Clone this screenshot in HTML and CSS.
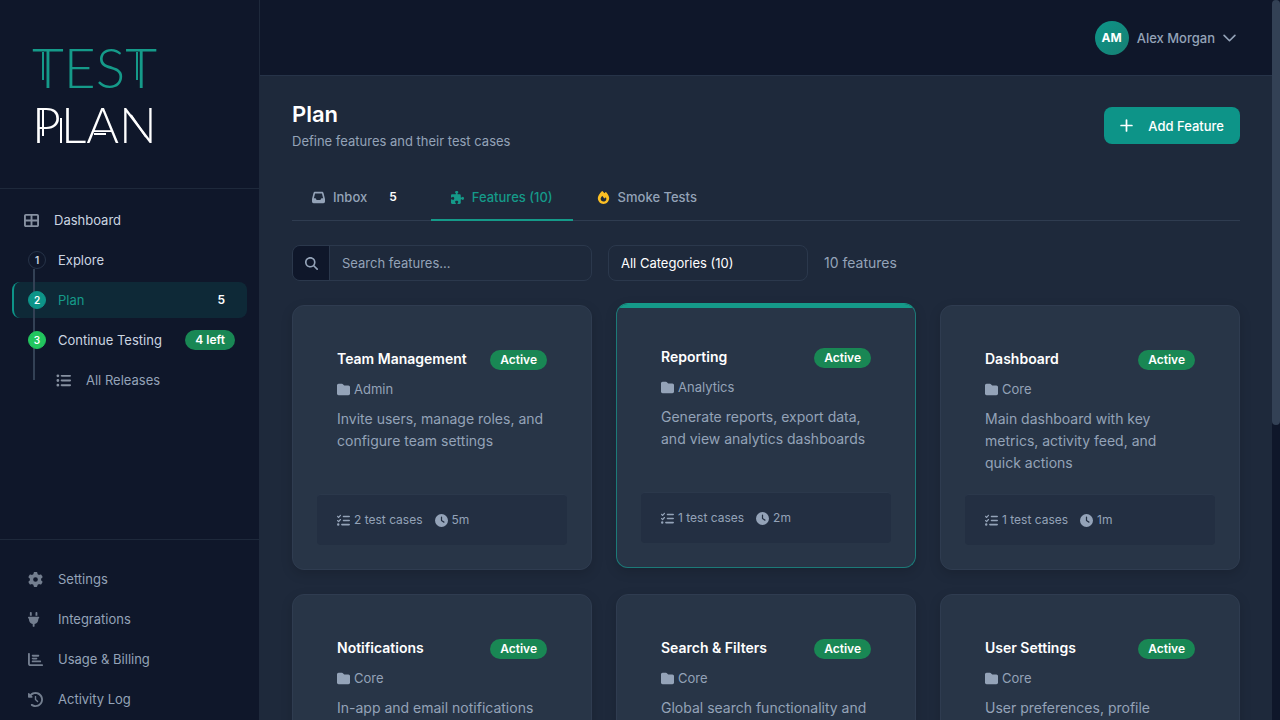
FILE: index.html
```html
<!DOCTYPE html>
<html lang="en">
<head>
    <meta charset="UTF-8">
    <meta name="viewport" content="width=device-width, initial-scale=1.0">
    <title>Plan - Test Plan</title>
    <link rel="stylesheet" href="styles.css">
</head>
<body>

<!-- Icon sprite -->
<svg class="sprite" aria-hidden="true">
    <symbol id="i-grid" viewBox="0 0 512 512"><path fill-rule="evenodd" d="M0 96C0 60.7 28.7 32 64 32H448c35.3 0 64 28.7 64 64V416c0 35.3-28.7 64-64 64H64c-35.3 0-64-28.7-64-64V96zm64 0v128H224V96H64zm384 0H288v128H448V96zM64 288v128H224V288H64zm384 0H288v128H448V288z"/></symbol>
    <symbol id="i-list" viewBox="0 0 512 512"><path d="M64 144a48 48 0 1 0 0-96 48 48 0 1 0 0 96zM192 64c-17.7 0-32 14.3-32 32s14.3 32 32 32H480c17.7 0 32-14.3 32-32s-14.3-32-32-32H192zm0 160c-17.7 0-32 14.3-32 32s14.3 32 32 32H480c17.7 0 32-14.3 32-32s-14.3-32-32-32H192zm0 160c-17.7 0-32 14.3-32 32s14.3 32 32 32H480c17.7 0 32-14.3 32-32s-14.3-32-32-32H192zM64 464a48 48 0 1 0 0-96 48 48 0 1 0 0 96zm48-208a48 48 0 1 0 -96 0 48 48 0 1 0 96 0z"/></symbol>
    <symbol id="i-gear" viewBox="0 0 512 512"><path d="M495.9 166.6c3.2 8.7 .5 18.4-6.4 24.6l-43.3 39.4c1.1 8.3 1.7 16.8 1.7 25.4s-.6 17.1-1.7 25.4l43.3 39.4c6.9 6.2 9.6 15.9 6.4 24.6c-4.4 11.9-9.7 23.3-15.8 34.3l-4.7 8.1c-6.6 11-14 21.4-22.1 31.2c-5.9 7.2-15.7 9.6-24.5 6.8l-55.7-17.7c-13.4 10.3-28.2 18.9-44 25.4l-12.5 57.1c-2 9.1-9 16.3-18.2 17.8c-13.8 2.3-28 3.5-42.5 3.5s-28.7-1.2-42.5-3.5c-9.2-1.5-16.2-8.7-18.2-17.8l-12.5-57.1c-15.8-6.5-30.6-15.1-44-25.4L83.1 425.9c-8.8 2.8-18.6 .3-24.5-6.8c-8.1-9.8-15.5-20.2-22.1-31.2l-4.7-8.1c-6.1-11-11.4-22.4-15.8-34.3c-3.2-8.7-.5-18.4 6.4-24.6l43.3-39.4C64.6 273.1 64 264.6 64 256s.6-17.1 1.7-25.4L22.4 191.2c-6.9-6.2-9.6-15.9-6.4-24.6c4.4-11.9 9.7-23.3 15.8-34.3l4.7-8.1c6.6-11 14-21.4 22.1-31.2c5.9-7.2 15.7-9.6 24.5-6.8l55.7 17.7c13.4-10.3 28.2-18.9 44-25.4l12.5-57.1c2-9.1 9-16.3 18.2-17.8C227.3 1.2 241.5 0 256 0s28.7 1.2 42.5 3.5c9.2 1.5 16.2 8.7 18.2 17.8l12.5 57.1c15.8 6.5 30.6 15.1 44 25.4l55.7-17.7c8.8-2.8 18.6-.3 24.5 6.8c8.1 9.8 15.5 20.2 22.1 31.2l4.7 8.1c6.1 11 11.4 22.4 15.8 34.3zM256 336a80 80 0 1 0 0-160 80 80 0 1 0 0 160z"/></symbol>
    <symbol id="i-plug" viewBox="0 0 512 512"><path d="M96 0C78.3 0 64 14.3 64 32v96h64V32c0-17.7-14.3-32-32-32zM288 0c-17.7 0-32 14.3-32 32v96h64V32c0-17.7-14.3-32-32-32zM32 160c-17.7 0-32 14.3-32 32s14.3 32 32 32v32c0 77.4 55 142 128 156.8V480c0 17.7 14.3 32 32 32s32-14.3 32-32V412.8C297 398 352 333.4 352 256V224c17.7 0 32-14.3 32-32s-14.3-32-32-32H32z"/></symbol>
    <symbol id="i-chart" viewBox="0 0 512 512"><path d="M32 32c17.7 0 32 14.3 32 32V400c0 8.8 7.2 16 16 16H480c17.7 0 32 14.3 32 32s-14.3 32-32 32H80c-44.2 0-80-35.8-80-80V64C0 46.3 14.3 32 32 32zm96 96c0-17.7 14.3-32 32-32l192 0c17.7 0 32 14.3 32 32s-14.3 32-32 32H160c-17.7 0-32-14.3-32-32zm32 64H288c17.7 0 32 14.3 32 32s-14.3 32-32 32H160c-17.7 0-32-14.3-32-32s14.3-32 32-32zm0 96H416c17.7 0 32 14.3 32 32s-14.3 32-32 32H160c-17.7 0-32-14.3-32-32s14.3-32 32-32z"/></symbol>
    <symbol id="i-history" viewBox="0 0 512 512"><path d="M75 75L41 41C25.9 25.9 0 36.6 0 57.9V168c0 13.3 10.7 24 24 24H134.1c21.4 0 32.1-25.9 17-41l-30.8-30.8C155 85.5 203 64 256 64c106 0 192 86 192 192s-86 192-192 192c-40.8 0-78.6-12.7-109.7-34.4c-14.5-10.1-34.4-6.6-44.6 7.9s-6.6 34.4 7.9 44.6C151.2 495 201.7 512 256 512c141.4 0 256-114.6 256-256S397.4 0 256 0C185.3 0 121.3 28.7 75 75zm181 53c-13.3 0-24 10.7-24 24V256c0 6.4 2.5 12.5 7 17l72 72c9.4 9.4 24.6 9.4 33.9 0s9.4-24.6 0-33.9l-65-65V152c0-13.3-10.7-24-24-24z"/></symbol>
    <symbol id="i-search" viewBox="0 0 512 512"><path d="M416 208c0 45.9-14.9 88.3-40 122.7L502.6 457.4c12.5 12.5 12.5 32.8 0 45.3s-32.8 12.5-45.3 0L330.7 376c-34.4 25.2-76.8 40-122.7 40C93.1 416 0 322.9 0 208S93.1 0 208 0S416 93.1 416 208zM208 352a144 144 0 1 0 0-288 144 144 0 1 0 0 288z"/></symbol>
    <symbol id="i-inbox" viewBox="0 0 512 512"><path d="M121 32C91.6 32 66 52 58.9 80.5L1.9 308.4C.6 313.5 0 318.7 0 323.9V416c0 35.3 28.7 64 64 64H448c35.3 0 64-28.7 64-64V323.9c0-5.2-.6-10.4-1.9-15.5l-57-227.9C446 52 420.4 32 391 32H121zm0 64H391l48 192H387.8c-12.1 0-23.2 6.8-28.6 17.7l-14.3 28.6c-5.4 10.8-16.5 17.7-28.6 17.7H195.8c-12.1 0-23.2-6.8-28.6-17.7l-14.3-28.6c-5.4-10.8-16.5-17.7-28.6-17.7H73L121 96z"/></symbol>
    <symbol id="i-puzzle" viewBox="0 0 512 512"><path d="M192 104.8c0-9.2-5.8-17.3-13.2-22.8C167.2 73.3 160 61.3 160 48c0-26.5 28.7-48 64-48s64 21.5 64 48c0 13.3-7.2 25.3-18.8 34c-7.4 5.5-13.2 13.6-13.2 22.8c0 12.8 10.4 23.2 23.2 23.2H336c26.5 0 48 21.5 48 48v56.8c0 12.8 10.4 23.2 23.2 23.2c9.2 0 17.3-5.8 22.8-13.2c8.7-11.6 20.7-18.8 34-18.8c26.5 0 48 28.7 48 64s-21.5 64-48 64c-13.3 0-25.3-7.2-34-18.8c-5.5-7.4-13.6-13.2-22.8-13.2c-12.8 0-23.2 10.4-23.2 23.2V464c0 26.5-21.5 48-48 48H279.2c-12.8 0-23.2-10.4-23.2-23.2c0-9.2 5.8-17.3 13.2-22.8c11.6-8.7 18.8-20.7 18.8-34c0-26.5-28.7-48-64-48s-64 21.5-64 48c0 13.3 7.2 25.3 18.8 34c7.4 5.5 13.2 13.6 13.2 22.8c0 12.8-10.4 23.2-23.2 23.2H48c-26.5 0-48-21.5-48-48V343.2C0 330.4 10.4 320 23.2 320c9.2 0 17.3 5.8 22.8 13.2C54.7 344.8 66.7 352 80 352c26.5 0 48-28.7 48-64s-21.5-64-48-64c-13.3 0-25.3 7.2-34 18.8C40.5 250.2 32.4 256 23.2 256C10.4 256 0 245.6 0 232.8V176c0-26.5 21.5-48 48-48H168.8c12.8 0 23.2-10.4 23.2-23.2z"/></symbol>
    <symbol id="i-fire" viewBox="0 0 448 512"><path d="M159.3 5.4c7.8-7.3 19.9-7.2 27.7 .1c27.6 25.9 53.5 53.8 77.7 84c11-14.4 23.5-30.1 37-42.9c7.9-7.4 20.1-7.4 28 .1c34.6 33 63.9 76.6 84.5 118c20.3 40.8 33.8 82.5 33.8 111.9C448 404.2 348.2 512 224 512C98.4 512 0 404.1 0 276.5c0-38.4 17.8-85.3 45.4-131.7C73.3 97.7 112.7 48.6 159.3 5.4zM225.7 416c25.3 0 47.7-7 68.8-21c42.1-29.4 53.4-88.2 28.1-134.4c-4.5-9-16-9.6-22.5-2l-25.2 29.3c-6.6 7.6-18.5 7.4-24.7-.5c-16.5-21-46-58.5-62.8-79.8c-6.3-8-18.3-8.1-24.7-.1c-33.8 42.5-50.8 69.3-50.8 99.4C112 375.4 162.6 416 225.7 416z"/></symbol>
    <symbol id="i-folder" viewBox="0 0 512 512"><path d="M64 480H448c35.3 0 64-28.7 64-64V160c0-35.3-28.7-64-64-64H288c-10.1 0-19.6-4.7-25.6-12.8L243.2 57.6C231.1 41.5 212.1 32 192 32H64C28.7 32 0 60.7 0 96V416c0 35.3 28.7 64 64 64z"/></symbol>
    <symbol id="i-check" viewBox="0 0 512 512"><path d="M152.1 38.2c9.9 8.9 10.7 24 1.8 33.9l-72 80c-4.4 4.9-10.6 7.8-17.2 7.9s-12.9-2.4-17.6-7L7 113C-2.3 103.6-2.3 88.4 7 79s24.6-9.4 33.9 0l22.1 22.1 55.1-61.2c8.9-9.9 24-10.7 33.9-1.8zm0 160c9.9 8.9 10.7 24 1.8 33.9l-72 80c-4.4 4.9-10.6 7.8-17.2 7.9s-12.9-2.4-17.6-7L7 273c-9.4-9.4-9.4-24.6 0-33.9s24.6-9.4 33.9 0l22.1 22.1 55.1-61.2c8.9-9.9 24-10.7 33.9-1.8zM224 96c0-17.7 14.3-32 32-32H480c17.7 0 32 14.3 32 32s-14.3 32-32 32H256c-17.7 0-32-14.3-32-32zm0 160c0-17.7 14.3-32 32-32H480c17.7 0 32 14.3 32 32s-14.3 32-32 32H256c-17.7 0-32-14.3-32-32zM160 416c0-17.7 14.3-32 32-32H480c17.7 0 32 14.3 32 32s-14.3 32-32 32H192c-17.7 0-32-14.3-32-32zM48 368a48 48 0 1 1 0 96 48 48 0 1 1 0-96z"/></symbol>
    <symbol id="i-clock" viewBox="0 0 512 512"><path d="M256 0a256 256 0 1 1 0 512A256 256 0 1 1 256 0zM232 120V256c0 8 4 15.5 10.7 20l96 64c11 7.4 25.9 4.4 33.3-6.7s4.4-25.9-6.7-33.3L280 243.2V120c0-13.3-10.7-24-24-24s-24 10.7-24 24z"/></symbol>
    <symbol id="i-plus" viewBox="0 0 12 12"><path d="M6 1v10M1 6h10" fill="none" stroke="currentColor" stroke-width="1.6" stroke-linecap="round"/></symbol>
    <symbol id="i-chevron" viewBox="0 0 12 12"><path d="M1 4l5 5 5-5" fill="none" stroke="currentColor" stroke-width="1.5" stroke-linecap="round" stroke-linejoin="round"/></symbol>
</svg>

<div class="app">

    <!-- Sidebar -->
    <aside class="sidebar">
        <a class="brand" href="#">
            <svg class="brand-logo" viewBox="0 0 128 108" role="img" aria-label="Test Plan">
                <g class="brand-top">
                    <text x="0" y="48">TEST</text>
                    <path d="M11 12v28M105 12v28"/>
                </g>
                <g class="brand-bottom">
                    <text x="0" y="103">PLAN</text>
                    <path d="M11 70v26M29 78v25M62 94h12M99 75l15 22"/>
                </g>
            </svg>
        </a>

        <nav class="nav">
            <a class="nav-item" href="#"><svg class="icon icon-lg"><use href="#i-grid"/></svg>Dashboard</a>
            <div class="nav-steps">
                <a class="nav-item step" href="#"><span class="step-num">1</span>Explore</a>
                <a class="nav-item step active" href="#"><span class="step-num current">2</span>Plan<span class="badge plain">5</span></a>
                <a class="nav-item step" href="#"><span class="step-num done">3</span>Continue Testing<span class="badge">4 left</span></a>
                <a class="nav-item sub" href="#"><svg class="icon icon-lg"><use href="#i-list"/></svg>All Releases</a>
            </div>
        </nav>

        <nav class="nav nav-bottom">
            <a class="nav-item" href="#"><svg class="icon icon-lg"><use href="#i-gear"/></svg>Settings</a>
            <a class="nav-item" href="#"><svg class="icon icon-lg"><use href="#i-plug"/></svg>Integrations</a>
            <a class="nav-item" href="#"><svg class="icon icon-lg"><use href="#i-chart"/></svg>Usage &amp; Billing</a>
            <a class="nav-item" href="#"><svg class="icon icon-lg"><use href="#i-history"/></svg>Activity Log</a>
        </nav>
    </aside>

    <div class="content">
        <!-- Top bar -->
        <header class="topbar">
            <button class="user-menu" type="button">
                <span class="avatar">AM</span>
                Alex Morgan
                <svg class="icon"><use href="#i-chevron"/></svg>
            </button>
        </header>

        <main class="page">
            <div class="page-head">
                <div>
                    <h1>Plan</h1>
                    <p class="subtitle">Define features and their test cases</p>
                </div>
                <button class="btn-add" type="button"><svg class="icon"><use href="#i-plus"/></svg>Add Feature</button>
            </div>

            <!-- Tabs -->
            <div class="tabs" role="tablist">
                <button class="tab" type="button" role="tab"><svg class="icon"><use href="#i-inbox"/></svg>Inbox<span class="badge plain">5</span></button>
                <button class="tab active" type="button" role="tab" aria-selected="true"><svg class="icon"><use href="#i-puzzle"/></svg>Features (10)</button>
                <button class="tab" type="button" role="tab"><svg class="icon fire"><use href="#i-fire"/></svg>Smoke Tests</button>
            </div>

            <!-- Filters -->
            <div class="filters">
                <div class="search">
                    <label class="search-icon" for="search" aria-label="Search"><svg class="icon"><use href="#i-search"/></svg></label>
                    <input type="text" id="search" placeholder="Search features...">
                </div>
                <select class="category" aria-label="Category">
                    <option>All Categories (10)</option>
                </select>
                <span class="count">10 features</span>
            </div>

            <!-- Feature cards -->
            <div class="cards">
                <article class="card">
                    <div class="card-body">
                        <div class="card-head"><h2>Team Management</h2><span class="badge">Active</span></div>
                        <p class="card-category"><svg class="icon"><use href="#i-folder"/></svg>Admin</p>
                        <p class="card-text">Invite users, manage roles, and configure team settings</p>
                    </div>
                    <div class="card-foot">
                        <span><svg class="icon"><use href="#i-check"/></svg>2 test cases</span>
                        <span><svg class="icon"><use href="#i-clock"/></svg>5m</span>
                    </div>
                </article>

                <article class="card raised">
                    <div class="card-body">
                        <div class="card-head"><h2>Reporting</h2><span class="badge">Active</span></div>
                        <p class="card-category"><svg class="icon"><use href="#i-folder"/></svg>Analytics</p>
                        <p class="card-text">Generate reports, export data, and view analytics dashboards</p>
                    </div>
                    <div class="card-foot">
                        <span><svg class="icon"><use href="#i-check"/></svg>1 test cases</span>
                        <span><svg class="icon"><use href="#i-clock"/></svg>2m</span>
                    </div>
                </article>

                <article class="card">
                    <div class="card-body">
                        <div class="card-head"><h2>Dashboard</h2><span class="badge">Active</span></div>
                        <p class="card-category"><svg class="icon"><use href="#i-folder"/></svg>Core</p>
                        <p class="card-text">Main dashboard with key metrics, activity feed, and quick actions</p>
                    </div>
                    <div class="card-foot">
                        <span><svg class="icon"><use href="#i-check"/></svg>1 test cases</span>
                        <span><svg class="icon"><use href="#i-clock"/></svg>1m</span>
                    </div>
                </article>

                <article class="card">
                    <div class="card-body">
                        <div class="card-head"><h2>Notifications</h2><span class="badge">Active</span></div>
                        <p class="card-category"><svg class="icon"><use href="#i-folder"/></svg>Core</p>
                        <p class="card-text">In-app and email notifications</p>
                    </div>
                </article>

                <article class="card">
                    <div class="card-body">
                        <div class="card-head"><h2>Search &amp; Filters</h2><span class="badge">Active</span></div>
                        <p class="card-category"><svg class="icon"><use href="#i-folder"/></svg>Core</p>
                        <p class="card-text">Global search functionality and</p>
                    </div>
                </article>

                <article class="card">
                    <div class="card-body">
                        <div class="card-head"><h2>User Settings</h2><span class="badge">Active</span></div>
                        <p class="card-category"><svg class="icon"><use href="#i-folder"/></svg>Core</p>
                        <p class="card-text">User preferences, profile</p>
                    </div>
                </article>
            </div>
        </main>
    </div>

    <div class="scrollbar" aria-hidden="true"><div class="scrollbar-thumb"></div></div>
</div>

</body>
</html>
```

FILE: styles.css
```css
/* General Styling */
* {
    box-sizing: border-box;
    margin: 0;
    padding: 0;
}

html {
    scrollbar-width: none;
}

body {
    background: #0f172a;
    color: #94a3b8;
    font-family: Inter, "Liberation Sans", sans-serif;
    font-size: 13px;
    line-height: 20px;
}

a {
    color: inherit;
    text-decoration: none;
}

button,
input,
select {
    font: inherit;
    color: inherit;
    background: none;
    border: none;
}

button {
    cursor: pointer;
}

.sprite {
    display: none;
}

.icon {
    width: 13px;
    height: 13px;
    flex-shrink: 0;
    fill: currentColor;
}

.icon-lg {
    width: 15px;
    height: 15px;
}

.badge {
    padding: 0 10px;
    border-radius: 10px;
    background: #198754;
    color: #fff;
    font-size: 12px;
    font-weight: 600;
    line-height: 20px;
}

.badge.plain {
    background: none;
}

/* Layout */
.app {
    display: grid;
    grid-template-columns: 260px 1fr 8px;
    align-items: start;
}

.scrollbar {
    position: sticky;
    top: 0;
    height: 100vh;
    background: #0f172a;
}

.scrollbar-thumb {
    height: 59%;
    border-radius: 4px;
    background: #334155;
}

/* Sidebar */
.sidebar {
    position: sticky;
    top: 0;
    display: flex;
    flex-direction: column;
    height: 100vh;
    background: #0f172a;
    border-right: 1px solid #1e293b;
}

.brand {
    display: block;
    padding: 40px 32px;
    border-bottom: 1px solid #1e293b;
}

.brand-logo {
    display: block;
    width: 128px;
    height: 108px;
    overflow: visible;
    font-family: Lato, "Liberation Sans", sans-serif;
    font-weight: 300;
    stroke-width: 2;
}

.brand-top {
    fill: #159a89;
    font-size: 55px;
}

.brand-bottom {
    fill: #fff;
    font-size: 50px;
}

.brand-top path {
    stroke: #159a89;
}

.brand-bottom path {
    stroke: #fff;
}

.nav {
    display: flex;
    flex-direction: column;
    gap: 4px;
    padding: 13px 12px;
    color: #cbd5e1;
}

.nav-item {
    display: flex;
    align-items: center;
    height: 36px;
    padding: 0 12px 0 10px;
    gap: 15px;
    border-left: 2px solid transparent;
    border-radius: 8px;
    font-size: 13px;
}

.nav-item .icon {
    color: #8791a1;
}

.nav-item .badge {
    margin-left: auto;
}

.nav-item.active {
    border-color: #0d9488;
    background: rgba(13, 148, 136, 0.15);
    color: #159a89;
}

.nav-steps {
    position: relative;
    display: flex;
    flex-direction: column;
    gap: 4px;
}

/* line that joins the steps */
.nav-steps::before {
    content: "";
    position: absolute;
    top: 27px;
    bottom: 18px;
    left: 21px;
    width: 2px;
    background: #334155;
}

.step {
    gap: 12px;
    padding-left: 14px;
}

.step-num {
    position: relative;
    width: 18px;
    height: 18px;
    border-radius: 50%;
    border: 1px solid #263348;
    font-size: 10px;
    font-weight: 600;
    line-height: 16px;
    text-align: center;
}

.step-num.current {
    background: #0d9488;
    border-color: #0d9488;
    color: #fff;
}

.step-num.done {
    background: #22c55e;
    border-color: #22c55e;
    color: #fff;
}

.sub {
    padding-left: 42px;
    color: #94a3b8;
}

.nav-bottom {
    margin-top: auto;
    padding: 21px 12px 3px;
    border-top: 1px solid #1e293b;
    color: #94a3b8;
}

.nav-bottom .nav-item {
    padding-left: 14px;
}

.nav-bottom .icon {
    color: #737e8f;
}

/* Top bar */
.topbar {
    display: flex;
    justify-content: flex-end;
    align-items: center;
    height: 76px;
    padding: 0 36px;
    background: #0f172a;
    border-bottom: 1px solid #263348;
}

.user-menu {
    display: flex;
    align-items: center;
    gap: 8px;
    font-weight: 500;
}

.avatar {
    width: 34px;
    border-radius: 50%;
    background: linear-gradient(135deg, #0d9488, #178073);
    color: #fff;
    font-size: 12px;
    font-weight: 700;
    line-height: 34px;
}

/* Page */
.content {
    min-height: 170vh;
    background: #1e293b;
}

.page {
    padding: 24px 32px;
}

.page-head {
    display: flex;
    justify-content: space-between;
    align-items: center;
    margin-bottom: 24px;
}

h1 {
    color: #fff;
    font-size: 22px;
    font-weight: 600;
    line-height: 28px;
    margin-bottom: 3px;
}

.btn-add {
    display: flex;
    align-items: center;
    gap: 15px;
    height: 37px;
    padding: 0 16px;
    border-radius: 8px;
    background: #0d9488;
    color: #fff;
    font-weight: 500;
}

.tabs {
    display: flex;
    gap: 4px;
    margin-bottom: 24px;
    border-bottom: 1px solid #2f3c50;
}

.tab {
    display: flex;
    align-items: center;
    gap: 8px;
    height: 46px;
    margin-bottom: -1px;
    padding: 0 20px;
    border-bottom: 2px solid transparent;
    font-weight: 500;
}

.tab .badge {
    margin-left: 4px;
}

.tab.active {
    color: #159a89;
    border-color: #159a89;
}

.fire {
    color: #fbbf24;
}

/* Filters */
.filters {
    display: flex;
    align-items: center;
    gap: 16px;
    margin-bottom: 24px;
}

.search {
    display: flex;
    width: 300px;
    height: 36px;
    border: 1px solid #2b384c;
    border-radius: 8px;
    overflow: hidden;
}

.search-icon {
    display: flex;
    align-items: center;
    justify-content: center;
    width: 37px;
    background: #0f172a;
    border-right: 1px solid #2b384c;
}

.search input {
    flex: 1;
    min-width: 0;
    padding: 0 12px;
}

.search input::placeholder {
    color: #94a3b8;
}

.category {
    width: 200px;
    height: 36px;
    padding: 0 12px;
    border: 1px solid #2b384c;
    border-radius: 8px;
    color: #fff;
    appearance: none;
}

.count {
    font-size: 14px;
}

/* Cards */
.cards {
    display: grid;
    grid-template-columns: repeat(3, 1fr);
    grid-auto-rows: minmax(265px, auto);
    gap: 24px;
}

.card {
    position: relative;
    display: flex;
    flex-direction: column;
    justify-content: space-between;
    padding: 24px;
    border: 1px solid #2f3c50;
    border-radius: 12px;
    background: #283547;
    box-shadow: 0 4px 12px rgba(0, 0, 0, 0.15);
    overflow: hidden;
}

.card.raised {
    border-color: #1c7a78;
    border-top-color: #159a89;
    transform: translateY(-2px);
}

.card.raised::before {
    content: "";
    position: absolute;
    top: 0;
    left: 0;
    right: 0;
    height: 4px;
    background: #159a89;
}

.card-body {
    padding: 20px;
}

.card-head {
    display: flex;
    justify-content: space-between;
    align-items: flex-start;
    margin-bottom: 8px;
}

h2 {
    color: #fff;
    font-size: 14px;
    font-weight: 600;
    line-height: 18px;
}

.card-category {
    display: flex;
    align-items: center;
    gap: 4px;
    margin-bottom: 8px;
    line-height: 22px;
}

.card-text {
    font-size: 14px;
    line-height: 22px;
}

.card-foot {
    display: flex;
    gap: 12px;
    padding: 14px 20px;
    border-top: 1px solid #2b384b;
    border-radius: 4px;
    background: #232f42;
    font-size: 12px;
    line-height: 22px;
}

.card-foot span {
    display: flex;
    align-items: center;
    gap: 4px;
}
```
